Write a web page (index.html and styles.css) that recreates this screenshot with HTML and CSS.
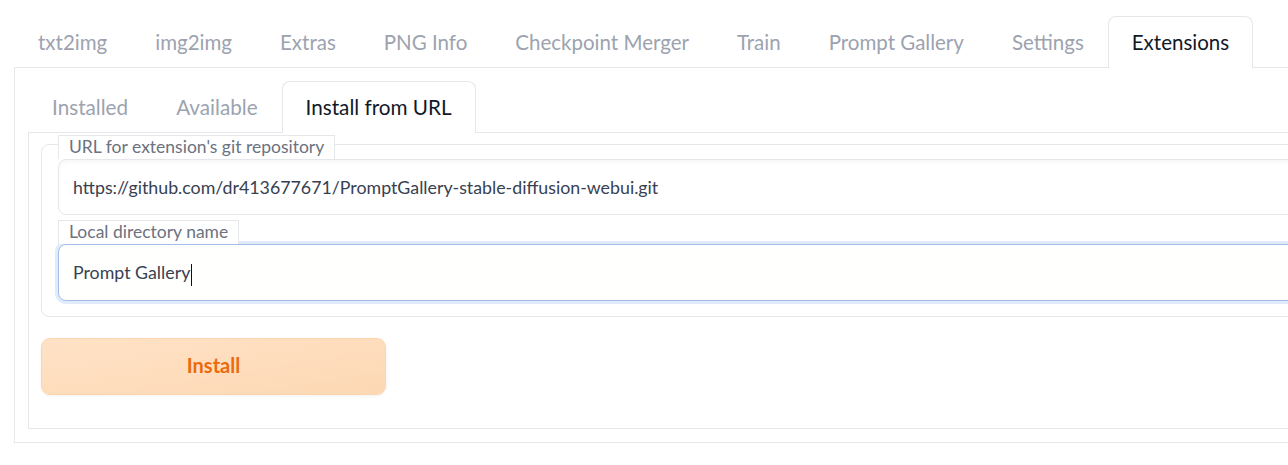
FILE: index.html
```html
<!DOCTYPE html>
<html lang="en">
<head>
<meta charset="utf-8">
<title>Extensions</title>
<link rel="stylesheet" href="styles.css">
</head>
<body>
<div class="app">
  <div class="tabs">
    <div class="tab">txt2img</div>
    <div class="tab">img2img</div>
    <div class="tab">Extras</div>
    <div class="tab">PNG Info</div>
    <div class="tab">Checkpoint Merger</div>
    <div class="tab">Train</div>
    <div class="tab">Prompt Gallery</div>
    <div class="tab">Settings</div>
    <div class="tab selected">Extensions</div>
  </div>
  <div class="panel outer">
    <div class="tabs sub">
      <div class="tab">Installed</div>
      <div class="tab">Available</div>
      <div class="tab selected">Install from URL</div>
    </div>
    <div class="panel inner">
      <div class="form">
        <div class="field">
          <span class="field-label">URL for extension's git repository</span>
          <div class="input">https://github.com/dr413677671/PromptGallery-stable-diffusion-webui.git</div>
        </div>
        <div class="field second">
          <span class="field-label">Local directory name</span>
          <div class="input focused">Prompt Gallery<span class="caret"></span></div>
        </div>
      </div>
      <button class="btn">Install</button>
    </div>
  </div>
</div>
</body>
</html>
```

FILE: styles.css
```css
html, body {
  margin: 0;
  padding: 0;
  overflow: hidden;
  background: #ffffff;
}
body {
  font-family: Lato, "Noto Sans", sans-serif;
}
.app {
  padding: 16px 0 0 14px;
  width: 1700px;
}
.tabs {
  display: flex;
  border-bottom: 1px solid #e5e7eb;
}
.tab {
  padding: 0 23px;
  height: 51px;
  line-height: 50px;
  border: 1px solid transparent;
  border-bottom: 0;
  border-radius: 8px 8px 0 0;
  margin-bottom: -1px;
  font-size: 20.5px;
  color: #9ca3af;
  white-space: nowrap;
}
.sub .tab {
  font-size: 20.7px;
}
.tab.selected {
  border-color: #e5e7eb;
  background: #ffffff;
  color: #111827;
}
.panel {
  border: 1px solid #e5e7eb;
  border-top: 0;
}
.outer {
  padding: 13px 12px 13px 13px;
}
.inner {
  padding: 11px 13px 33px 12px;
}
.form {
  display: flex;
  flex-direction: column;
  border: 1px solid #e5e7eb;
  border-radius: 8px;
  padding: 0 16px 15px 16px;
}
.field {
  display: flex;
  flex-direction: column;
  align-items: flex-start;
}
.field:first-child {
  margin-top: -10px;
}
.field.second {
  margin-top: 5px;
}
.field-label {
  display: block;
  border: 1px solid #e5e7eb;
  border-bottom: 0;
  padding: 0 10px;
  height: 23px;
  line-height: 22px;
  font-size: 17.5px;
  color: #6b7280;
  background: #ffffff;
  position: relative;
  z-index: 1;
}
.input {
  align-self: stretch;
  box-sizing: border-box;
  height: 56px;
  line-height: 54px;
  border: 1px solid #e5e7eb;
  border-radius: 8px;
  padding: 0 14px;
  font-size: 17.8px;
  color: #374151;
  background: #ffffff;
  box-shadow: inset 0 3px 6px -2px rgba(0, 0, 0, 0.05);
}
.input.focused {
  height: 57px;
  line-height: 55px;
  border-color: #a3bde8;
  box-shadow: 0 0 0 3px #e0ecfb;
  background: #fffffe;
}
.caret {
  display: inline-block;
  width: 1px;
  height: 22px;
  background: #111111;
  vertical-align: middle;
  margin-left: 1px;
}
.btn {
  display: block;
  margin-top: 21px;
  width: 345px;
  height: 57px;
  padding: 0 0 3px 0;
  border: 1px solid #fdd6af;
  border-radius: 9px;
  background: linear-gradient(to bottom right, #ffe2c6, #fdd8b4);
  box-shadow: 0 1px 3px rgba(0, 0, 0, 0.06);
  color: #ea6a0c;
  font-family: Lato, "Noto Sans", sans-serif;
  font-size: 20px;
  font-weight: 700;
  cursor: pointer;
}
```
